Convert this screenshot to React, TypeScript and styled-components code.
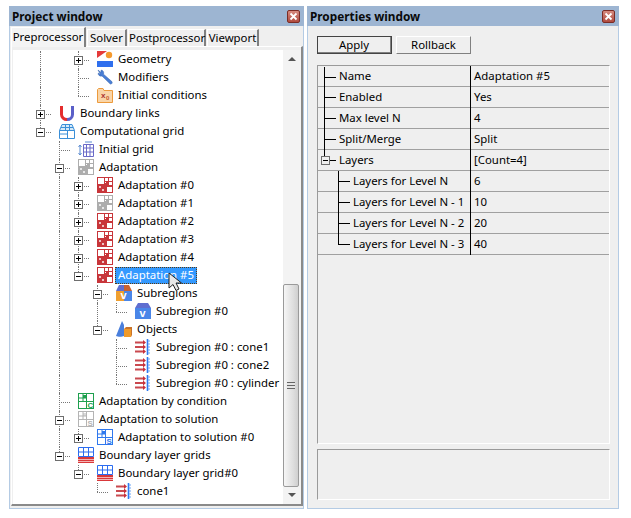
import React from "react";
import styled, { createGlobalStyle } from "styled-components";

const GlobalStyle = createGlobalStyle`
  html, body {
    margin: 0;
    padding: 0;
    background: #ffffff;
  }
  body {
    font-family: "Noto Sans", "Open Sans", "Liberation Sans", sans-serif;
    font-size: 11.4px;
    color: #000000;
  }
`;

const Page = styled.div`
  display: flex;
  align-items: flex-start;
  gap: 3px;
  width: 631px;
  height: 518px;
  box-sizing: border-box;
  padding: 6px 0 0 9px;
  overflow: hidden;
`;

const Win = styled.div<{ $width: number }>`
  width: ${(p) => p.$width}px;
  height: 503px;
  box-sizing: border-box;
  display: flex;
  flex-direction: column;
  background: #efefef;
  border: 1px solid #b4cbe4;
  border-top: none;
`;

const TitleBar = styled.div`
  flex: 0 0 20px;
  margin: 0 -1px;
  display: flex;
  align-items: center;
  justify-content: space-between;
  padding: 0 4px 0 3px;
  background: #9db5d2;
  font-weight: 700;
  font-size: 11.8px;
  color: #0a0a0a;
`;

const CloseBtn = styled.div`
  width: 13px;
  height: 13px;
  box-sizing: border-box;
  display: flex;
  align-items: center;
  justify-content: center;
  border: 1px solid #7b2c25;
  border-radius: 2px;
  background: linear-gradient(#d68a7f, #b04a3e);
`;

const Tabs = styled.div`
  flex: 0 0 20px;
  display: flex;
  align-items: flex-end;
  padding-left: 1px;
  gap: 1px;
`;

const Tab = styled.div<{ $active?: boolean; $width: number }>`
  width: ${(p) => p.$width}px;
  height: ${(p) => (p.$active ? 20 : 17)}px;
  box-sizing: border-box;
  text-align: center;
  line-height: ${(p) => (p.$active ? 17 : 16)}px;
  background: ${(p) => (p.$active ? "#f4f4f4" : "#efefef")};
  border-top: 1px solid #ffffff;
  border-left: 1px solid #ffffff;
  border-right: 2px solid #808080;
  margin-bottom: ${(p) => (p.$active ? -1 : 0)}px;
  position: relative;
`;

const TreePanel = styled.div`
  flex: 1;
  display: flex;
  margin: 0 0 2px 1px;
  min-height: 0;
  padding: 3px 0 0 1px;
  border-top: 1px solid #ffffff;
  border-right: 2px solid #8a8a8a;
  border-bottom: 2px solid #8a8a8a;
  border-left: 1px solid #ffffff;
`;

const Tree = styled.div`
  flex: 1;
  background: #ffffff;
  padding: 1px 0 0 18px;
  overflow: hidden;
  position: relative;
`;

const Row = styled.div`
  display: flex;
  align-items: center;
  height: 18px;
  white-space: nowrap;
`;

type Guide = "none" | "pass" | "tee" | "end" | "top";

const GuideCell = styled.div<{ $kind: Guide }>`
  flex: 0 0 19px;
  height: 18px;
  position: relative;
  display: flex;
  align-items: center;
  justify-content: center;

  &::before {
    content: "";
    display: ${(p) => (p.$kind === "none" ? "none" : "block")};
    position: absolute;
    left: 9px;
    top: 0;
    bottom: ${(p) => (p.$kind === "end" || p.$kind === "top" ? 9 : 0)}px;
    border-left: 1px dotted #777777;
  }

  &::after {
    content: "";
    display: ${(p) => (p.$kind === "tee" || p.$kind === "end" || p.$kind === "top" ? "block" : "none")};
    position: absolute;
    left: 9px;
    right: -1px;
    top: 9px;
    border-top: 1px dotted #777777;
  }
`;

const Expander = styled.div<{ $open: boolean }>`
  width: 9px;
  height: 9px;
  box-sizing: border-box;
  border: 1px solid #6e6e6e;
  background: #ffffff;
  position: relative;
  z-index: 1;

  &::before {
    content: "";
    position: absolute;
    left: 1px;
    top: 3px;
    width: 5px;
    height: 1px;
    background: #000000;
  }

  &::after {
    content: "";
    display: ${(p) => (p.$open ? "none" : "block")};
    position: absolute;
    left: 3px;
    top: 1px;
    width: 1px;
    height: 5px;
    background: #000000;
  }
`;

const IconSlot = styled.div`
  flex: 0 0 16px;
  height: 16px;
  margin: 0 1px 2px 9px;
  display: flex;
`;

const Label = styled.div<{ $selected?: boolean }>`
  height: 17px;
  line-height: 13px;
  box-sizing: border-box;
  padding: 0 2px;
  margin: 0 0 1px 1px;
  border: 1px dotted ${(p) => (p.$selected ? "#5b3a10" : "transparent")};
  background: ${(p) => (p.$selected ? "#3399ff" : "transparent")};
  color: ${(p) => (p.$selected ? "#ffffff" : "#000000")};
`;

const Pointer = styled.svg`
  position: absolute;
  left: 155px;
  top: 222px;
  z-index: 3;
`;

const ScrollBar = styled.div`
  flex: 0 0 18px;
  display: flex;
  flex-direction: column;
  background: #f3f3f3;
`;

const ScrollArrow = styled.div`
  flex: 0 0 17px;
  display: flex;
  align-items: center;
  justify-content: center;
`;

const ScrollTrack = styled.div`
  flex: 1;
  display: flex;
  flex-direction: column;
  justify-content: flex-end;
  padding: 0 2px 0 0;
`;

const ScrollThumb = styled.div`
  height: 203px;
  box-sizing: border-box;
  border: 1px solid #9a9a9a;
  border-radius: 2px;
  background: linear-gradient(90deg, #f6f6f6, #dcdcdc 70%, #cfcfcf);
  display: flex;
  align-items: center;
  justify-content: center;
`;

const Grip = styled.div`
  width: 8px;
  height: 7px;
  background: repeating-linear-gradient(#666666 0 1px, #e4e4e4 1px 3px);
`;

const PropsBody = styled.div`
  flex: 1;
  display: flex;
  flex-direction: column;
  padding: 10px 8px 8px 9px;
  min-height: 0;
`;

const ButtonBar = styled.div`
  display: flex;
  gap: 4px;
  margin-bottom: 11px;
`;

const Button = styled.div<{ $default?: boolean }>`
  width: 75px;
  height: 18px;
  box-sizing: border-box;
  text-align: center;
  line-height: ${(p) => (p.$default ? 15 : 16)}px;
  background: #efefef;
  border-top: 1px solid #ffffff;
  border-left: 1px solid #ffffff;
  border-right: 1px solid #808080;
  border-bottom: 1px solid #808080;
  ${(p) => p.$default && "outline: 1px solid #444444; outline-offset: -1px; border-right-width: 2px; border-bottom-width: 2px;"}
`;

const Sunken = styled.div<{ $height?: number }>`
  ${(p) => (p.$height ? `flex: 0 0 ${p.$height}px;` : "flex: 1; min-height: 0;")}
  box-sizing: border-box;
  border-top: 1px solid #9a9a9a;
  border-left: 1px solid #9a9a9a;
  border-bottom: 1px solid #ffffff;
  border-right: 1px solid #ffffff;
`;

const Gap = styled.div`
  flex: 0 0 5px;
`;

const PropRow = styled.div`
  display: grid;
  grid-template-columns: 153px 1fr;
  height: 21px;
  box-sizing: border-box;
  border-bottom: 1px solid #a0a0a0;
`;

const NameCell = styled.div<{ $depth: number }>`
  position: relative;
  padding-left: ${(p) => (p.$depth ? 35 : 21)}px;
  line-height: 19px;
  white-space: nowrap;
  border-right: 1px solid #000000;
  margin-bottom: -1px;
`;

const ValueCell = styled.div`
  padding-left: 3px;
  line-height: 19px;
`;

const Branch = styled.div<{ $depth: number; $last?: boolean; $first?: boolean }>`
  position: absolute;
  left: ${(p) => (p.$depth ? 20 : 6)}px;
  top: ${(p) => (p.$first ? 1 : 0)}px;
  width: 12px;
  height: ${(p) => (p.$last ? 11 : 21)}px;
  box-sizing: border-box;
  border-left: 1px solid #000000;

  &::after {
    content: "";
    position: absolute;
    left: 0;
    right: 0;
    top: 10px;
    border-top: 1px solid #000000;
  }
`;

const PropExpander = styled(Expander)`
  position: absolute;
  left: 3px;
  top: 6px;
  background: #efefef;
`;

const AdaptIcon = ({ c }: { c: string }) => (
  <svg width="16" height="16" viewBox="0 0 16 16">
    <rect width="16" height="16" fill={c} />
    <rect x="1" y="1" width="6" height="6" fill="#fff" />
    <rect x="8" y="1" width="3" height="3" fill="#fff" />
    <rect x="12" y="1" width="3" height="3" fill="#fff" />
    <rect x="12" y="5" width="3" height="3" fill="#fff" />
    <rect x="8" y="5" width="1" height="1" fill="#fff" />
    <rect x="2" y="9" width="2" height="2" fill="#fff" opacity="0.7" />
    <rect x="5" y="12" width="2" height="2" fill="#fff" opacity="0.7" />
    <rect x="10" y="10" width="5" height="5" fill="#fff" />
  </svg>
);

const LetterGridIcon = ({ c, letter, grey }: { c: string; letter: string; grey?: boolean }) => (
  <svg width="16" height="16" viewBox="0 0 16 16">
    <rect x="0.5" y="0.5" width="15" height="15" fill="#fff" stroke={c} />
    <path d="M8.500 1v14M1 8.500h14M5 1v7M1 5h7" stroke={c} />
    <rect x="5" y="2" width="3" height="3" fill={c} opacity={grey ? 0.5 : 1} />
    <rect x="9" y="9" width="6" height="6" fill="#fff" />
    <text x="9.500" y="14.500" fontSize="8" fontWeight="700" fontFamily="Liberation Sans" fill={c}>
      {letter}
    </text>
  </svg>
);

const LayerGridIcon = () => (
  <svg width="16" height="16" viewBox="0 0 16 16">
    <path d="M.5.5h15v9H.5zM5.500.5v9M10.500.5v9M.5 5h15" fill="#fff" stroke="#2b6cf0" />
    <rect x="0" y="10" width="16" height="6" fill="#d9383a" />
    <path d="M0 12.500h16M0 14.500h16" stroke="#f3b4b4" />
  </svg>
);

const ObjectIcon = () => (
  <svg width="16" height="16" viewBox="0 0 16 16">
    <path d="M0 3.500h9M0 8h9M0 12.500h9" stroke="#c9494f" strokeWidth="2" />
    <path d="M8 1l3 2.500L8 6zM8 5.500L11 8l-3 2.500zM8 10l3 2.500L8 15z" fill="#c9303a" />
    <path d="M12.500 0v16" stroke="#2f7bf0" strokeWidth="1.600" />
    <path d="M13 2h2M13 5h2M13 8h2M13 11h2M13 14h2" stroke="#6aa5f5" />
  </svg>
);

const icons: Record<string, React.ReactNode> = {
  geometry: (
    <svg width="16" height="16" viewBox="0 0 16 16">
      <path d="M0 0h10L0 7z" fill="#e53a3a" />
      <circle cx="12" cy="4" r="3.200" fill="#f59a2e" />
      <rect x="0" y="10" width="16" height="6" fill="#2f6fee" />
    </svg>
  ),
  wrench: (
    <svg width="16" height="16" viewBox="0 0 16 16">
      <path d="M1 1l3 2.500V1.200C6 1 7.200 3 6.500 5.200l8.300 7.300c.9 1 .2 2.800-1.500 2.600L5 7C3 7.600.6 6 1.300 4L3.600 5.600 1 1z" fill="#4a7fd6" stroke="#2e5ea8" strokeWidth="0.5" />
    </svg>
  ),
  init: (
    <svg width="16" height="16" viewBox="0 0 16 16">
      <path d="M.5 2.500V15.500h15V3.500H7L6 1.500H1.500z" fill="#f9d5a8" stroke="#ec9a3c" />
      <text x="4" y="11" fontSize="8" fontWeight="700" fontFamily="Liberation Sans" fill="#a83232">x</text>
      <text x="9" y="13" fontSize="6" fontWeight="700" fontFamily="Liberation Sans" fill="#c65a2e">0</text>
    </svg>
  ),
  magnet: (
    <svg width="16" height="16" viewBox="0 0 16 16">
      <path d="M2.500 1v8.500a5.500 5 0 0 0 5.500 5" fill="none" stroke="#e42d2d" strokeWidth="3" />
      <path d="M13.500 1v8.500a5.500 5 0 0 1-5.500 5" fill="none" stroke="#5a5fc8" strokeWidth="3" />
    </svg>
  ),
  compgrid: (
    <svg width="16" height="16" viewBox="0 0 16 16">
      <path d="M.5 7.500h15v8H.5zM8.500 7.500v8M.5 11h8" fill="#fff" stroke="#3a8fd8" />
      <path d="M3 1.500h10l2.500 6H.5zM6.500 1.500v6M10.500 1.500v6M2 4.500h12" fill="#d5e9f8" stroke="#3a8fd8" />
    </svg>
  ),
  initgrid: (
    <svg width="16" height="16" viewBox="0 0 16 16">
      <path d="M5.500 3.500h10v12h-10zM8.500 3.500v12M12 3.500v12M5.500 7h10M5.500 11h10" fill="#fff" stroke="#6a6ac8" />
      <path d="M2 4v10M0.500 6L2 4l1.500 2M0.500 12L2 14l1.500-2M7 1h7" fill="none" stroke="#5a8ad0" />
    </svg>
  ),
  subregions: (
    <svg width="16" height="16" viewBox="0 0 16 16">
      <path d="M3 0h5v6H0z" fill="#5f6ed0" />
      <path d="M8 0h5l3 6H8z" fill="#c9622f" />
      <rect x="0" y="6" width="8" height="10" fill="#f0a030" />
      <rect x="8" y="6" width="8" height="10" fill="#4a86e8" />
      <text x="4.500" y="14" fontSize="11" fontWeight="700" fontFamily="Liberation Sans" fill="#fff">v</text>
    </svg>
  ),
  subregion: (
    <svg width="16" height="16" viewBox="0 0 16 16">
      <path d="M3 0h10l3 5H0z" fill="#5f6ed0" />
      <rect x="0" y="5" width="16" height="11" fill="#4a86e8" />
      <text x="4.500" y="14" fontSize="11" fontWeight="700" fontFamily="Liberation Sans" fill="#fff">v</text>
    </svg>
  ),
  objects: (
    <svg width="16" height="16" viewBox="0 0 16 16">
      <path d="M6 0L0 15c2 1 6 1 8 0V4z" fill="#4a7fdc" />
      <path d="M8 8h7v8H8z" fill="#f09a2a" />
      <path d="M8 8l2-2h6v8l-1 2V8z" fill="#c9732a" />
    </svg>
  ),
  obj: <ObjectIcon />,
  red: <AdaptIcon c="#c8353a" />,
  grey: <AdaptIcon c="#adadad" />,
  adaptC: <LetterGridIcon c="#1ea04e" letter="C" />,
  adaptS: <LetterGridIcon c="#b4b4b4" letter="S" grey />,
  adaptS0: <LetterGridIcon c="#2f78ee" letter="S" />,
  layer: <LayerGridIcon />,
};

type TreeRow = {
  g: Guide[];
  exp?: "plus" | "minus";
  icon: string;
  label: string;
  selected?: boolean;
};

const n: Guide = "none";
const p: Guide = "pass";
const t: Guide = "tee";
const e: Guide = "end";

const treeRows: TreeRow[] = [
  { g: [p, n, t], exp: "plus", icon: "geometry", label: "Geometry" },
  { g: [p, n, t], icon: "wrench", label: "Modifiers" },
  { g: [p, n, e], icon: "init", label: "Initial conditions" },
  { g: [t], exp: "plus", icon: "magnet", label: "Boundary links" },
  { g: [e], exp: "minus", icon: "compgrid", label: "Computational grid" },
  { g: [n, t], icon: "initgrid", label: "Initial grid" },
  { g: [n, t], exp: "minus", icon: "grey", label: "Adaptation" },
  { g: [n, p, t], exp: "plus", icon: "red", label: "Adaptation #0" },
  { g: [n, p, t], exp: "plus", icon: "grey", label: "Adaptation #1" },
  { g: [n, p, t], exp: "plus", icon: "red", label: "Adaptation #2" },
  { g: [n, p, t], exp: "plus", icon: "red", label: "Adaptation #3" },
  { g: [n, p, t], exp: "plus", icon: "red", label: "Adaptation #4" },
  { g: [n, p, e], exp: "minus", icon: "red", label: "Adaptation #5", selected: true },
  { g: [n, p, n, t], exp: "minus", icon: "subregions", label: "Subregions" },
  { g: [n, p, n, p, e], icon: "subregion", label: "Subregion #0" },
  { g: [n, p, n, e], exp: "minus", icon: "objects", label: "Objects" },
  { g: [n, p, n, n, t], icon: "obj", label: "Subregion #0 : cone1" },
  { g: [n, p, n, n, t], icon: "obj", label: "Subregion #0 : cone2" },
  { g: [n, p, n, n, e], icon: "obj", label: "Subregion #0 : cylinder" },
  { g: [n, t], icon: "adaptC", label: "Adaptation by condition" },
  { g: [n, t], exp: "minus", icon: "adaptS", label: "Adaptation to solution" },
  { g: [n, p, e], exp: "plus", icon: "adaptS0", label: "Adaptation to solution #0" },
  { g: [n, e], exp: "minus", icon: "layer", label: "Boundary layer grids" },
  { g: [n, n, e], exp: "minus", icon: "layer", label: "Boundary layer grid#0" },
  { g: [n, n, n, e], icon: "obj", label: "cone1" },
];

const props = [
  { name: "Name", value: "Adaptation #5", depth: 0 },
  { name: "Enabled", value: "Yes", depth: 0 },
  { name: "Max level N", value: "4", depth: 0 },
  { name: "Split/Merge", value: "Split", depth: 0 },
  { name: "Layers", value: "[Count=4]", depth: 0, open: true },
  { name: "Layers for Level N", value: "6", depth: 1 },
  { name: "Layers for Level N - 1", value: "10", depth: 1 },
  { name: "Layers for Level N - 2", value: "20", depth: 1 },
  { name: "Layers for Level N - 3", value: "40", depth: 1, last: true },
];

const CloseIcon = () => (
  <CloseBtn>
    <svg width="9" height="9" viewBox="0 0 9 9">
      <path d="M1.500 1.500l6 6M7.500 1.500l-6 6" stroke="#ffffff" strokeWidth="1.800" />
    </svg>
  </CloseBtn>
);

const Triangle = ({ up }: { up?: boolean }) => (
  <svg width="8" height="5" viewBox="0 0 8 5">
    <path d={up ? "M0 5h8L4 1z" : "M0 0h8L4 4z"} fill="#555555" />
  </svg>
);

export default function App() {
  return (
    <Page>
      <GlobalStyle />
      <Win $width={295}>
        <TitleBar>
          Project window
          <CloseIcon />
        </TitleBar>
        <Tabs>
          <Tab $active $width={75}>Preprocessor</Tab>
          <Tab $width={40}>Solver</Tab>
          <Tab $width={78}>Postprocessor</Tab>
          <Tab $width={52}>Viewport</Tab>
        </Tabs>
        <TreePanel>
          <Tree>
            {treeRows.map((row) => {
              const lastIdx = row.g.length - 1;
              return (
                <Row key={row.label}>
                  {row.g.map((kind, i) => (
                    <GuideCell key={i} $kind={kind}>
                      {i === lastIdx && row.exp && <Expander $open={row.exp === "minus"} />}
                    </GuideCell>
                  ))}
                  <IconSlot>{icons[row.icon]}</IconSlot>
                  <Label $selected={row.selected}>{row.label}</Label>
                </Row>
              );
            })}
            <Pointer width="14" height="20" viewBox="0 0 14 20">
              <path d="M1 1v15l4-3.500 3 6 3-1.500-3-6h5.500z" fill="#e8e8e8" stroke="#222222" strokeWidth="1" />
            </Pointer>
          </Tree>
          <ScrollBar>
            <ScrollArrow><Triangle up /></ScrollArrow>
            <ScrollTrack>
              <ScrollThumb><Grip /></ScrollThumb>
            </ScrollTrack>
            <ScrollArrow><Triangle /></ScrollArrow>
          </ScrollBar>
        </TreePanel>
      </Win>
      <Win $width={312}>
        <TitleBar>
          Properties window
          <CloseIcon />
        </TitleBar>
        <PropsBody>
          <ButtonBar>
            <Button $default>Apply</Button>
            <Button>Rollback</Button>
          </ButtonBar>
          <Sunken>
            {props.map((row, i) => (
              <PropRow key={row.name}>
                <NameCell $depth={row.depth}>
                  {row.open ? (
                    <>
                      <Branch $depth={0} $last />
                      <PropExpander $open />
                    </>
                  ) : (
                    <Branch $depth={row.depth} $last={row.last} $first={i === 0} />
                  )}
                  {row.name}
                </NameCell>
                <ValueCell>{row.value}</ValueCell>
              </PropRow>
            ))}
          </Sunken>
          <Gap />
          <Sunken $height={51} />
        </PropsBody>
      </Win>
    </Page>
  );
}
